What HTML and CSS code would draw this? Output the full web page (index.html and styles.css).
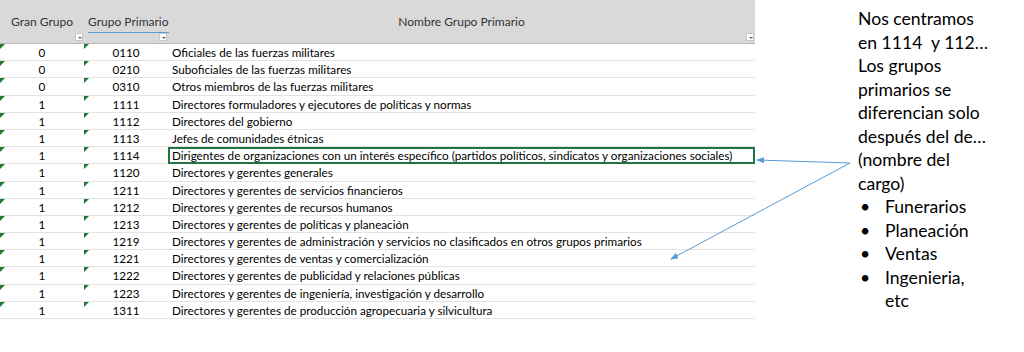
FILE: index.html
```html
<!DOCTYPE html>
<html lang="es">
<head>
<meta charset="utf-8">
<link rel="stylesheet" href="styles.css">
</head>
<body>
<div class="page">
  <div class="sheet">
    <div class="head">
      <div class="hcell"><span class="htext">Gran Grupo</span><span class="filter"></span></div>
      <div class="hcell"><span class="htext sel">Grupo Primario</span><span class="filter"></span></div>
      <div class="hcell"><span class="htext">Nombre Grupo Primario</span><span class="filter"></span></div>
    </div>
    <div class="rows">
      <div class="row"><div class="c num tri">0</div><div class="c num tri">0110</div><div class="c name">Oficiales de las fuerzas militares</div></div>
      <div class="row"><div class="c num tri">0</div><div class="c num tri">0210</div><div class="c name">Suboficiales de las fuerzas militares</div></div>
      <div class="row"><div class="c num tri">0</div><div class="c num tri">0310</div><div class="c name">Otros miembros de las fuerzas militares</div></div>
      <div class="row"><div class="c num tri">1</div><div class="c num tri">1111</div><div class="c name">Directores formuladores y ejecutores de políticas y normas</div></div>
      <div class="row"><div class="c num tri">1</div><div class="c num tri">1112</div><div class="c name">Directores del gobierno</div></div>
      <div class="row"><div class="c num tri">1</div><div class="c num tri">1113</div><div class="c name">Jefes de comunidades étnicas</div></div>
      <div class="row"><div class="c num tri">1</div><div class="c num tri">1114</div><div class="c name active">Dirigentes de organizaciones con un interés específico (partidos políticos, sindicatos y organizaciones sociales)</div></div>
      <div class="row"><div class="c num tri">1</div><div class="c num tri">1120</div><div class="c name">Directores y gerentes generales</div></div>
      <div class="row"><div class="c num tri">1</div><div class="c num tri">1211</div><div class="c name">Directores y gerentes de servicios financieros</div></div>
      <div class="row"><div class="c num tri">1</div><div class="c num tri">1212</div><div class="c name">Directores y gerentes de recursos humanos</div></div>
      <div class="row"><div class="c num tri">1</div><div class="c num tri">1213</div><div class="c name">Directores y gerentes de políticas y planeación</div></div>
      <div class="row"><div class="c num tri">1</div><div class="c num tri">1219</div><div class="c name">Directores y gerentes de administración y servicios no clasificados en otros grupos primarios</div></div>
      <div class="row"><div class="c num tri">1</div><div class="c num tri">1221</div><div class="c name">Directores y gerentes de ventas y comercialización</div></div>
      <div class="row"><div class="c num tri">1</div><div class="c num tri">1222</div><div class="c name">Directores y gerentes de publicidad y relaciones públicas</div></div>
      <div class="row"><div class="c num tri">1</div><div class="c num tri">1223</div><div class="c name">Directores y gerentes de ingeniería, investigación y desarrollo</div></div>
      <div class="row last"><div class="c num tri">1</div><div class="c num tri">1311</div><div class="c name">Directores y gerentes de producción agropecuaria y silvicultura</div></div>
    </div>
  </div>
  <div class="note">
    <p>Nos centramos<br>en 1114&nbsp; y 112…</p>
    <p>Los grupos<br>primarios se<br>diferencian solo<br>después del de…<br>(nombre del<br>cargo)</p>
    <ul>
      <li>Funerarios</li>
      <li>Planeación</li>
      <li>Ventas</li>
      <li>Ingenieria,<br>etc</li>
    </ul>
  </div>
  <svg class="arrows" width="1024" height="352" viewBox="0 0 1024 352">
    <defs>
      <marker id="ah" markerWidth="8" markerHeight="6" refX="7" refY="3" orient="auto" markerUnits="userSpaceOnUse">
        <path d="M0,0 L8,3 L0,6 Z" fill="#5b9bd5"/>
      </marker>
    </defs>
    <line x1="850" y1="163" x2="757" y2="160" stroke="#5b9bd5" stroke-width="1" marker-end="url(#ah)"/>
    <line x1="850" y1="163" x2="671" y2="259" stroke="#5b9bd5" stroke-width="1" marker-end="url(#ah)"/>
  </svg>
</div>
</body>
</html>
```
FILE: styles.css
```css
* { box-sizing: border-box; margin: 0; padding: 0; }
html, body { background: #fff; }
body { width: 1024px; height: 352px; overflow: hidden; font-family: Lato, "Liberation Sans", sans-serif; color: #111; }
.page { position: relative; display: flex; width: 1024px; height: 352px; }
.sheet { width: 755px; flex: none; }
.head {
  display: grid;
  grid-template-columns: 84px 84px 587px;
  height: 44px;
  background: #d9d9d9;
  border-bottom: 1px solid #b8b8b8;
}
.hcell { position: relative; display: flex; justify-content: center; padding-top: 14px; }
.htext { font-size: 12px; color: #333; height: 19px; white-space: nowrap; }
.htext.sel { border-bottom: 1px solid #5b9bd5; padding: 0 0 3px; align-self: flex-start; }
.hcell:nth-child(2) { justify-content: flex-start; padding-left: 4px; }
.filter {
  position: absolute; right: 1px; bottom: 2px;
  width: 8px; height: 8px; background: #fff; border: 1px solid #c8c8c8;
}
.filter::after {
  content: ""; position: absolute; left: 1.5px; top: 2.5px;
  border-left: 2px solid transparent; border-right: 2px solid transparent; border-top: 2px solid #666;
}
.rows { display: flex; flex-direction: column; }
.row {
  display: grid;
  grid-template-columns: 84px 84px 587px;
  height: 17.2px;
  border-bottom: 1px solid #e3e3e3;
  font-size: 11.7px;
  line-height: 17px;
  color: #000;
}
.c { position: relative; white-space: nowrap; }
.num { text-align: center; }
.name { padding-left: 4px; }
.tri::before {
  content: ""; position: absolute; left: 0; top: 0;
  border-top: 5px solid #1f7a32; border-right: 5px solid transparent;
}
.active { outline: 2px solid #217346; outline-offset: -2px; }
.note { margin-left: 103px; width: 160px; font-family: Lato, "Liberation Sans", sans-serif; font-size: 17.6px; line-height: 23.5px; color: #000; padding-top: 7px; }
.note ul { list-style: none; }
.note li { position: relative; padding-left: 27px; }
.note li::before { content: "•"; position: absolute; left: 2px; }
.arrows { position: absolute; left: 0; top: 0; pointer-events: none; }
```
